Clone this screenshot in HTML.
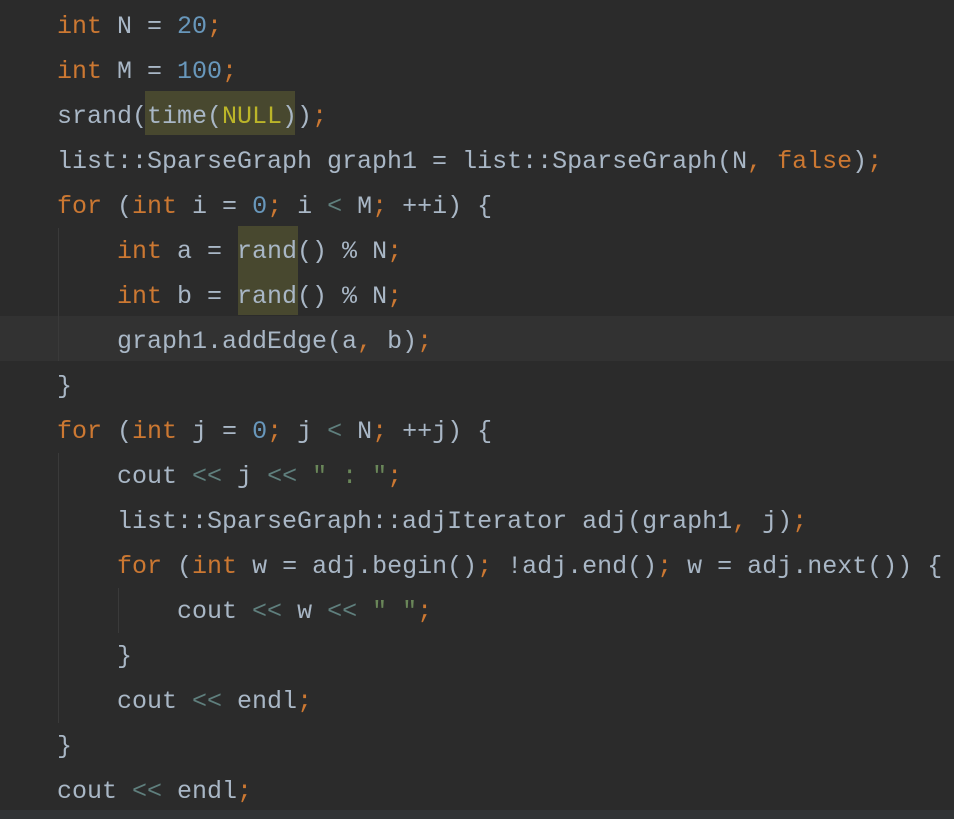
<!DOCTYPE html>
<html><head><style>
body{margin:0;width:954px;height:819px;background:#2b2b2b;overflow:hidden;position:relative;font-family:"Liberation Mono","Noto Sans CJK SC",monospace;font-size:25px;color:#a9b7c6}
.l{position:absolute;left:57px;height:45px;line-height:45px;white-space:pre}
.k{color:#cc7832}.n{color:#6897bb}.s{color:#6a8759}.o{color:#5f7f7d}.u{color:#bbb529}
.hl{position:absolute;background:#48482f}
.g{position:absolute;width:1px;background:#3a3a3a}
</style></head><body>
<div style="position:absolute;left:0;top:316px;width:954px;height:45px;background:#323232"></div>
<div style="position:absolute;left:0;top:810px;width:954px;height:9px;background:#313335"></div>
<div class="hl" style="left:145px;top:91px;width:150px;height:44px"></div>
<div class="hl" style="left:238px;top:226px;width:60px;height:89px"></div>
<div class="g" style="left:58px;top:228px;height:133px"></div>
<div class="g" style="left:58px;top:453px;height:270px"></div>
<div class="g" style="left:118px;top:588px;height:45px"></div>
<div class="l" style="top:4px"><span class="k">int</span> N = <span class="n">20</span><span class="k">;</span></div>
<div class="l" style="top:49px"><span class="k">int</span> M = <span class="n">100</span><span class="k">;</span></div>
<div class="l" style="top:94px">srand(time(<span class="u">NULL</span>))<span class="k">;</span></div>
<div class="l" style="top:139px">list::SparseGraph graph1 = list::SparseGraph(N<span class="k">,</span> <span class="k">false</span>)<span class="k">;</span></div>
<div class="l" style="top:184px"><span class="k">for</span> (<span class="k">int</span> i = <span class="n">0</span><span class="k">;</span> i <span class="o">&lt;</span> M<span class="k">;</span> ++i) {</div>
<div class="l" style="top:229px">    <span class="k">int</span> a = rand() % N<span class="k">;</span></div>
<div class="l" style="top:274px">    <span class="k">int</span> b = rand() % N<span class="k">;</span></div>
<div class="l" style="top:319px">    graph1.addEdge(a<span class="k">,</span> b)<span class="k">;</span></div>
<div class="l" style="top:364px">}</div>
<div class="l" style="top:409px"><span class="k">for</span> (<span class="k">int</span> j = <span class="n">0</span><span class="k">;</span> j <span class="o">&lt;</span> N<span class="k">;</span> ++j) {</div>
<div class="l" style="top:454px">    cout <span class="o">&lt;&lt;</span> j <span class="o">&lt;&lt;</span> <span class="s">" : "</span><span class="k">;</span></div>
<div class="l" style="top:499px">    list::SparseGraph::adjIterator adj(graph1<span class="k">,</span> j)<span class="k">;</span></div>
<div class="l" style="top:544px">    <span class="k">for</span> (<span class="k">int</span> w = adj.begin()<span class="k">;</span> !adj.end()<span class="k">;</span> w = adj.next()) {</div>
<div class="l" style="top:589px">        cout <span class="o">&lt;&lt;</span> w <span class="o">&lt;&lt;</span> <span class="s">" "</span><span class="k">;</span></div>
<div class="l" style="top:634px">    }</div>
<div class="l" style="top:679px">    cout <span class="o">&lt;&lt;</span> endl<span class="k">;</span></div>
<div class="l" style="top:724px">}</div>
<div class="l" style="top:769px">cout <span class="o">&lt;&lt;</span> endl<span class="k">;</span></div>
</body></html>
